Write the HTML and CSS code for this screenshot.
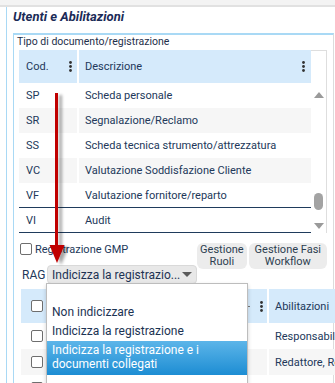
FILE: index.html
```html
<!DOCTYPE html>
<html>
<head>
<meta charset="utf-8">
<title>Utenti e Abilitazioni</title>
<link rel="stylesheet" href="styles.css">
</head>
<body>
<div class="topbar"></div>
<div class="page">
  <h1 class="title">Utenti e Abilitazioni</h1>
  <section class="group">
    <div class="legend">Tipo di documento/registrazione</div>
    <div class="grid">
      <div class="grid-main">
        <div class="row head">
          <div class="cell c-cod">Cod.<svg class="dots" width="3" height="11" viewBox="0 0 3 11"><circle cx="1.5" cy="1.5" r="1.4"/><circle cx="1.5" cy="5.5" r="1.4"/><circle cx="1.5" cy="9.5" r="1.4"/></svg></div>
          <div class="cell c-desc">Descrizione<svg class="dots" width="3" height="11" viewBox="0 0 3 11"><circle cx="1.5" cy="1.5" r="1.4"/><circle cx="1.5" cy="5.5" r="1.4"/><circle cx="1.5" cy="9.5" r="1.4"/></svg></div>
        </div>
        <div class="row"><div class="cell c-cod">SP</div><div class="cell c-desc">Scheda personale</div></div>
        <div class="row alt"><div class="cell c-cod">SR</div><div class="cell c-desc">Segnalazione/Reclamo</div></div>
        <div class="row"><div class="cell c-cod">SS</div><div class="cell c-desc">Scheda tecnica strumento/attrezzatura</div></div>
        <div class="row alt"><div class="cell c-cod">VC</div><div class="cell c-desc">Valutazione Soddisfazione Cliente</div></div>
        <div class="row line"><div class="cell c-cod">VF</div><div class="cell c-desc">Valutazione fornitore/reparto</div></div>
        <div class="row line"><div class="cell c-cod">VI</div><div class="cell c-desc">Audit</div></div>
      </div>
      <div class="vscroll">
        <div class="vs-up"></div>
        <div class="vs-thumb"></div>
        <div class="vs-down"></div>
      </div>
    </div>
    <div class="controls">
      <div class="ctl-left">
        <label class="chk"><span class="box"></span>Registrazione GMP</label>
        <div class="rag">
          <span class="rag-label">RAG</span>
          <div class="select"><span class="sel-text">Indicizza la registrazio...</span><span class="caret"></span></div>
        </div>
      </div>
      <div class="btns">
        <button class="btn">Gestione<br>Ruoli</button>
        <button class="btn btn-wide">Gestione Fasi<br>Workflow</button>
      </div>
    </div>
    <div class="grid2">
      <div class="row2 head2">
        <div class="g2-chk"><span class="box"></span></div>
        <div class="g2-mid"><span class="tick"></span><svg class="dots" width="3" height="11" viewBox="0 0 3 11"><circle cx="1.5" cy="1.5" r="1.4"/><circle cx="1.5" cy="5.5" r="1.4"/><circle cx="1.5" cy="9.5" r="1.4"/></svg></div>
        <div class="g2-abil">Abilitazioni</div>
      </div>
      <div class="row2"><div class="g2-chk"><span class="box"></span></div><div class="g2-mid"></div><div class="g2-abil">Responsabile</div></div>
      <div class="row2 alt"><div class="g2-chk"><span class="box"></span></div><div class="g2-mid"></div><div class="g2-abil">Redattore, Re</div></div>
      <div class="row2"><div class="g2-chk"><span class="box"></span></div><div class="g2-mid"></div><div class="g2-abil"></div></div>
    </div>
  </section>
</div>
<ul class="dropdown">
  <li class="opt">&nbsp;</li>
  <li class="opt">Non indicizzare</li>
  <li class="opt">Indicizza la registrazione</li>
  <li class="opt active">Indicizza la registrazione e i documenti collegati</li>
</ul>
<svg class="arrow" width="335" height="383" viewBox="0 0 335 383">
  <defs>
    <filter id="sh" x="-50%" y="-10%" width="300%" height="130%">
      <feDropShadow dx="4" dy="2" stdDeviation="1.6" flood-color="#000" flood-opacity="0.35"/>
    </filter>
  </defs>
  <g filter="url(#sh)" fill="#c00000">
    <rect x="55" y="93" width="3" height="154"/>
    <polygon points="49.5,245 64.5,245 57,263"/>
  </g>
</svg>
</body>
</html>
```
FILE: styles.css
```css
* { box-sizing: border-box; margin: 0; padding: 0; }
html, body { width: 335px; height: 383px; overflow: hidden; background: #fff; }
body {
  font-family: Roboto, "Noto Sans", "Liberation Sans", sans-serif;
  font-size: 11px;
  color: #22385a;
  position: relative;
}
.topbar { height: 7px; background: #f3f3f3; border-bottom: 2px solid #e1e1e1; }
.page {
  margin-left: 6px;
  border-left: 1px solid #a9d9f5;
  padding: 2px 1px 0 6px;
  height: 376px;
}
.title {
  font-size: 13px;
  font-weight: 700;
  font-style: italic;
  color: #1b2b57;
  line-height: 16px;
  margin-bottom: 8px;
}
.group {
  border-top: 2px solid #a9d9f5;
  border-left: 1px solid #a9d9f5;
  border-right: 1px solid #dcdcdc;
  height: 360px;
}
.legend { font-size: 10.5px; line-height: 13px; padding-left: 3px; margin-bottom: 2px; color: #1e2f4a; }

.grid { display: flex; margin: 0 6px 0 5px; }
.grid-main { flex: 1; }
.row { display: flex; height: 25px; }
.row.head { height: 33px; background: #d5eafb; }
.row.alt { background: #f6f6f6; }
.row.line { border-bottom: 1px solid #1f3b5c; }
.cell { display: flex; align-items: center; justify-content: space-between; }
.c-cod { width: 60px; padding: 0 5px 0 7px; border-right: 2px solid #fff; }
.c-desc { flex: 1; padding: 0 6px 0 6px; }
.dots { fill: #333; flex: none; }

.vscroll {
  width: 16px;
  border-top: 1px solid #dedede;
  border-right: 1px solid #dedede;
  display: flex;
  flex-direction: column;
  align-items: center;
}
.vs-up {
  margin-top: 41px;
  border-left: 5px solid transparent;
  border-right: 5px solid transparent;
  border-bottom: 6px solid #9a9a9a;
}
.vs-thumb { margin-top: 95px; width: 9px; height: 17px; border-radius: 5px; background: #a3a3a3; }
.vs-down {
  margin-top: 13px;
  border-left: 5px solid transparent;
  border-right: 5px solid transparent;
  border-top: 6px solid #9a9a9a;
}

.controls { display: flex; justify-content: space-between; align-items: flex-start; margin-top: 10px; padding-left: 6px; }
.ctl-left { flex: none; }
.chk { display: flex; align-items: center; gap: 3px; height: 12px; }
.box { display: block; width: 12px; height: 12px; border: 1px solid #6e6e6e; border-radius: 2px; background: #fff; flex: none; }
.rag { display: flex; align-items: center; margin-top: 10px; }
.rag-label { width: 27px; padding-left: 2px; font-size: 12px; }
.select {
  width: 150px;
  height: 19px;
  background: #e8e8e8;
  border: 1px solid #d9d9d9;
  border-radius: 4px;
  display: flex;
  align-items: center;
  justify-content: space-between;
  padding: 0 4px 0 4px;
  font-size: 12px;
  color: #1d3354;
}
.caret { border-left: 5px solid transparent; border-right: 5px solid transparent; border-top: 5px solid #5a5a5a; }
.btns { display: flex; gap: 2px; margin-right: 6px; flex: none; }
.btn {
  font-family: inherit;
  font-size: 11px;
  line-height: 12px;
  white-space: nowrap;
  flex: none;
  color: #2c3e50;
  background: #ececec;
  border: none;
  border-radius: 6px;
  padding: 1px 3px;
  height: 26px;
}
.btn-wide { padding: 1px 6px; }

.grid2 { margin: 5px 0 0 7px; width: 330px; }
.row2 { display: flex; height: 26px; }
.row2.head2 { height: 34px; background: #d5eafb; }
.row2.alt { background: #f6f6f6; }
.row2 > div { display: flex; align-items: center; }
.g2-chk { width: 28px; padding-left: 10px; }
.g2-mid { width: 220px; border-right: 2px solid #fff; justify-content: flex-end; padding-right: 4px; gap: 10px; }
.tick { width: 2px; height: 1px; background: #777; }
.g2-abil { flex: 1; padding-left: 6px; white-space: nowrap; overflow: hidden; }

.dropdown {
  position: absolute;
  left: 46px;
  top: 283px;
  width: 202px;
  height: 110px;
  list-style: none;
  background: #fff;
  border: 1px solid #bdbdbd;
  box-shadow: 0 2px 4px rgba(0,0,0,0.18);
}
.opt { padding: 2px 5px 3px; line-height: 14px; font-size: 12px; color: #1b3353; }
.opt.active { color: #fff; background: linear-gradient(#5cb5e9, #1d8dd3); padding: 2px 5px 4px; }

.arrow { position: absolute; left: 0; top: 0; pointer-events: none; }
```
